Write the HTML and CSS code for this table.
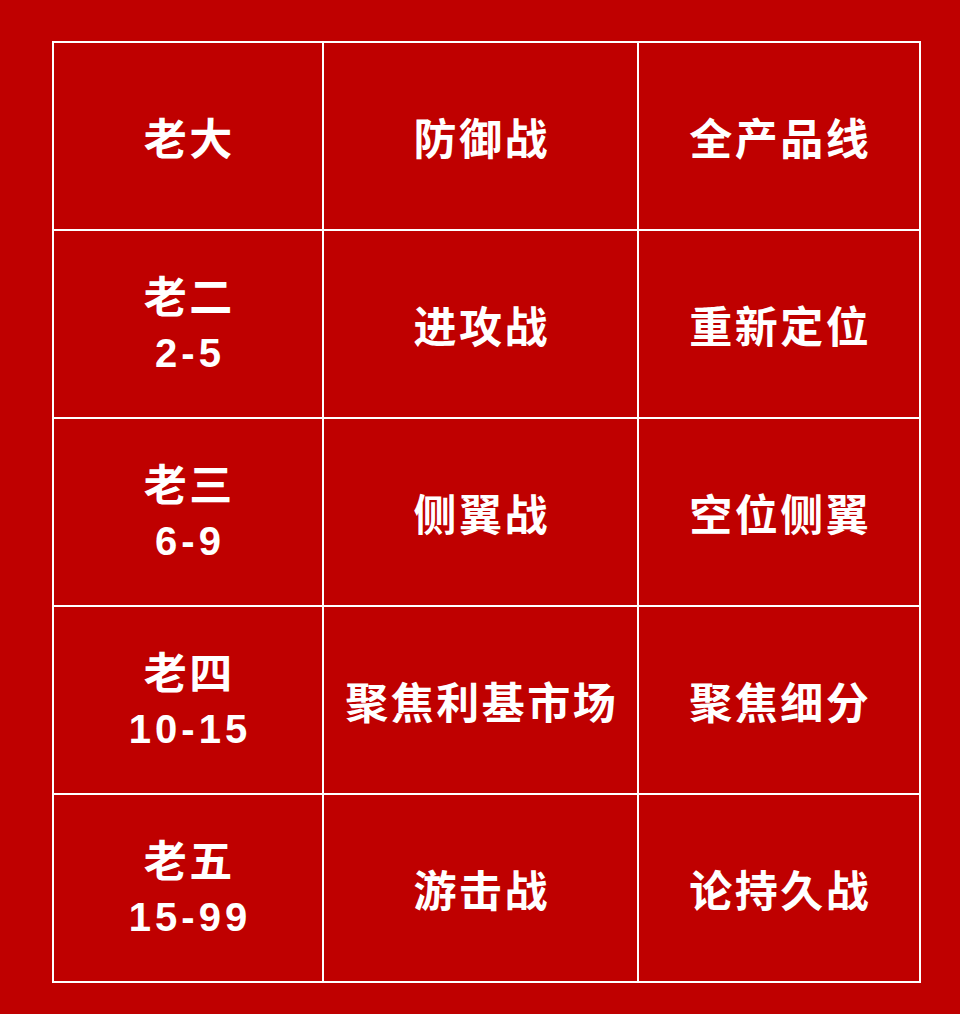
FILE: index.html
```html
<!DOCTYPE html>
<html lang="zh-CN">
<head>
<meta charset="utf-8">
<title>市场地位与战略</title>
<link rel="stylesheet" href="styles.css">
</head>
<body>
<div class="page">
  <div class="table">
    <div class="cell"><span class="zh">老大</span></div>
    <div class="cell"><span class="zh">防御战</span></div>
    <div class="cell"><span class="zh">全产品线</span></div>

    <div class="cell"><span class="zh">老二</span><span class="num">2-5</span></div>
    <div class="cell"><span class="zh">进攻战</span></div>
    <div class="cell"><span class="zh">重新定位</span></div>

    <div class="cell"><span class="zh">老三</span><span class="num">6-9</span></div>
    <div class="cell"><span class="zh">侧翼战</span></div>
    <div class="cell"><span class="zh">空位侧翼</span></div>

    <div class="cell"><span class="zh">老四</span><span class="num">10-15</span></div>
    <div class="cell"><span class="zh">聚焦利基市场</span></div>
    <div class="cell"><span class="zh">聚焦细分</span></div>

    <div class="cell"><span class="zh">老五</span><span class="num">15-99</span></div>
    <div class="cell"><span class="zh">游击战</span></div>
    <div class="cell"><span class="zh">论持久战</span></div>
  </div>
</div>
</body>
</html>
```
FILE: styles.css
```css
html, body {
  margin: 0;
  padding: 0;
  background: #bf0000;
}
.page {
  width: 960px;
  height: 1014px;
  padding: 41px 0 0 52px;
  box-sizing: border-box;
  background: #bf0000;
}
.table {
  display: grid;
  grid-template-columns: 268px 313px 280px;
  grid-auto-rows: 186px;
  gap: 2px;
  padding: 2px;
  background: #ffffff;
  width: max-content;
}
.cell {
  background: #bf0000;
  display: flex;
  flex-direction: column;
  align-items: center;
  justify-content: center;
  color: #ffffff;
  font-weight: bold;
}
.zh {
  font-family: "Noto Sans CJK SC", "Noto Sans", sans-serif;
  font-size: 43px;
  line-height: 59px;
  letter-spacing: 2.5px;
  padding-left: 2.5px;
}
.num {
  font-family: "Liberation Sans", Arial, sans-serif;
  font-size: 40px;
  line-height: 59px;
  letter-spacing: 4px;
  padding-left: 4px;
}
```
